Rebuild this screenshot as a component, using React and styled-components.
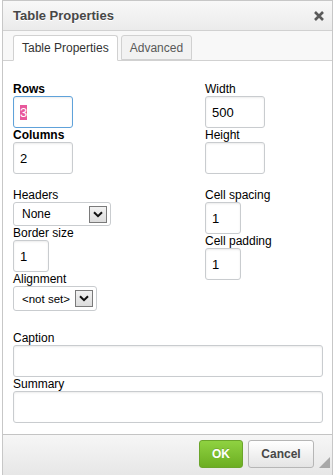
import styled, { createGlobalStyle } from "styled-components";

const GlobalStyle = createGlobalStyle`
  body {
    margin: 0;
    background: #fff;
    font-family: "Liberation Sans", Arial, sans-serif;
  }
`;

const Chevron = () => (
  <svg width="10" height="7" viewBox="0 0 10 7">
    <path d="M1 1.2 L5 5.2 L9 1.2" fill="none" stroke="#111" strokeWidth="2" />
  </svg>
);

const CloseIcon = () => (
  <svg width="10" height="10" viewBox="0 0 10 10">
    <path d="M1 1 L9 9 M9 1 L1 9" stroke="#5a5a5a" strokeWidth="2.6" />
  </svg>
);

const Field = ({ label, bold, width, height = 32, value, focused, selected }) => (
  <div>
    <Label $bold={bold}>{label}</Label>
    <TextBox $width={width} $height={height} $focused={focused}>
      {selected ? <Selection>{value}</Selection> : value}
    </TextBox>
  </div>
);

const SelectField = ({ label, width, height, value, small }) => (
  <div>
    <Label>{label}</Label>
    <SelectBox $width={width} $height={height}>
      <SelectText $small={small}>{value}</SelectText>
      <DropButton>
        <Chevron />
      </DropButton>
    </SelectBox>
  </div>
);

const App = () => {
  return (
    <>
      <GlobalStyle />
      <Dialog>
        <TitleBar>
          <Title>Table Properties</Title>
          <CloseButton>
            <CloseIcon />
          </CloseButton>
        </TitleBar>
        <TabStrip>
          <Tab $active>Table Properties</Tab>
          <Tab>Advanced</Tab>
        </TabStrip>
        <Body>
          <Columns>
            <Column>
              <Group>
                <Field label="Rows" bold width={60} value="3" focused selected />
                <Field label="Columns" bold width={60} value="2" />
              </Group>
              <Group>
                <SelectField label="Headers" width={98} height={24} value="None" />
                <Field label="Border size" width={36} value="1" />
                <SelectField
                  label="Alignment"
                  width={84}
                  height={25}
                  value="<not set>"
                  small
                />
              </Group>
            </Column>
            <Column>
              <Group>
                <Field label="Width" width={60} value="500" />
                <Field label="Height" width={60} value="" />
              </Group>
              <Group>
                <Field label="Cell spacing" width={36} value="1" />
                <Field label="Cell padding" width={36} value="1" />
              </Group>
            </Column>
          </Columns>
          <Wide>
            <Field label="Caption" width={310} value="" />
            <Field label="Summary" width={310} value="" />
          </Wide>
        </Body>
        <Footer>
          <OkButton>OK</OkButton>
          <CancelButton>Cancel</CancelButton>
          <Grip />
        </Footer>
      </Dialog>
    </>
  );
};

export default App;

const Dialog = styled.div`
  width: 331px;
  height: 478px;
  margin-left: 2px;
  box-sizing: border-box;
  border: 1px solid #c7c7c7;
  display: flex;
  flex-direction: column;
  background: #fff;
`;

const TitleBar = styled.div`
  height: 29px;
  flex-shrink: 0;
  display: flex;
  align-items: center;
  justify-content: space-between;
  padding: 0 8px 0 10px;
  background: linear-gradient(#f8f8f8, #ebebeb);
  border-bottom: 1px solid #d1d1d1;
`;

const Title = styled.div`
  font-size: 13px;
  font-weight: bold;
  color: #474747;
  text-shadow: 0 1px 0 #fff;
`;

const CloseButton = styled.div`
  display: flex;
  margin-top: 1px;
`;

const TabStrip = styled.div`
  display: flex;
  gap: 3px;
  padding: 4px 10px 0;
  height: 25px;
  flex-shrink: 0;
  background: #f8f8f8;
  border-bottom: 1px solid #d1d1d1;
`;

const Tab = styled.div`
  box-sizing: border-box;
  padding: 0 8px;
  margin-bottom: -1px;
  display: flex;
  align-items: center;
  font-size: 12px;
  color: ${(p) => (p.$active ? "#333" : "#595959")};
  background: ${(p) => (p.$active ? "#fff" : "#f2f2f2")};
  border: 1px solid #d1d1d1;
  border-bottom: ${(p) => (p.$active ? "1px solid #fff" : "1px solid #d1d1d1")};
  border-radius: 3px 3px 0 0;
  height: ${(p) => (p.$active ? "26px" : "25px")};
`;

const Body = styled.div`
  flex: 1;
  padding: 21px 10px 0;
  display: flex;
  flex-direction: column;
`;

const Columns = styled.div`
  display: grid;
  grid-template-columns: 192px 1fr;
`;

const Column = styled.div`
  display: flex;
  flex-direction: column;
  gap: 14px;
`;

const Group = styled.div`
  display: flex;
  flex-direction: column;
`;

const Wide = styled.div`
  margin-top: 20px;
  display: flex;
  flex-direction: column;
`;

const Label = styled.div`
  font-size: 12px;
  line-height: 14px;
  color: #000;
  font-weight: ${(p) => (p.$bold ? "bold" : "normal")};
`;

const TextBox = styled.div`
  width: ${(p) => p.$width}px;
  height: ${(p) => p.$height}px;
  box-sizing: border-box;
  border: 1px solid ${(p) => (p.$focused ? "#5fa2da" : "#c9cccf")};
  border-radius: 3px;
  box-shadow: inset 0 1px 2px rgba(0, 0, 0, 0.08);
  background: #fff;
  padding: 0 6px;
  display: flex;
  align-items: center;
  font-size: 13px;
  color: #000;
`;

const Selection = styled.span`
  background: #e8589b;
  color: #fff;
  line-height: 15px;
`;

const SelectBox = styled.div`
  width: ${(p) => p.$width}px;
  height: ${(p) => p.$height}px;
  box-sizing: border-box;
  border: 1px solid #c9cccf;
  border-radius: 3px;
  background: #fff;
  display: flex;
  align-items: center;
  justify-content: space-between;
  padding: 0 3px 0 8px;
`;

const SelectText = styled.span`
  font-size: ${(p) => (p.$small ? "11.5px" : "12px")};
  color: #000;
`;

const DropButton = styled.span`
  width: 18px;
  height: 17px;
  box-sizing: border-box;
  border: 1px solid #7a7a7a;
  background: linear-gradient(#f2f2f2, #dcdcdc);
  display: flex;
  align-items: center;
  justify-content: center;
`;

const Footer = styled.div`
  position: relative;
  height: 43px;
  flex-shrink: 0;
  box-sizing: border-box;
  border-top: 1px solid #c4c4c4;
  background: linear-gradient(#f6f6f6, #e6e6e6);
  display: flex;
  justify-content: flex-end;
  align-items: flex-start;
  gap: 5px;
  padding: 5px 18px 0 0;
`;

const BaseButton = styled.div`
  height: 28px;
  box-sizing: border-box;
  border-radius: 3px;
  display: flex;
  align-items: center;
  justify-content: center;
  font-size: 12px;
  font-weight: bold;
`;

const OkButton = styled(BaseButton)`
  width: 44px;
  color: #fff;
  background: linear-gradient(#8fd241, #6cae22);
  border: 1px solid #6ba52b;
  text-shadow: 0 -1px 0 rgba(0, 0, 0, 0.15);
`;

const CancelButton = styled(BaseButton)`
  width: 66px;
  color: #474747;
  background: linear-gradient(#fff, #e4e4e4);
  border: 1px solid #b6b6b6;
`;

const Grip = styled.div`
  position: absolute;
  right: 2px;
  bottom: 9px;
  width: 0;
  height: 0;
  border-left: 11px solid transparent;
  border-bottom: 11px solid #a8a8a8;
`;
